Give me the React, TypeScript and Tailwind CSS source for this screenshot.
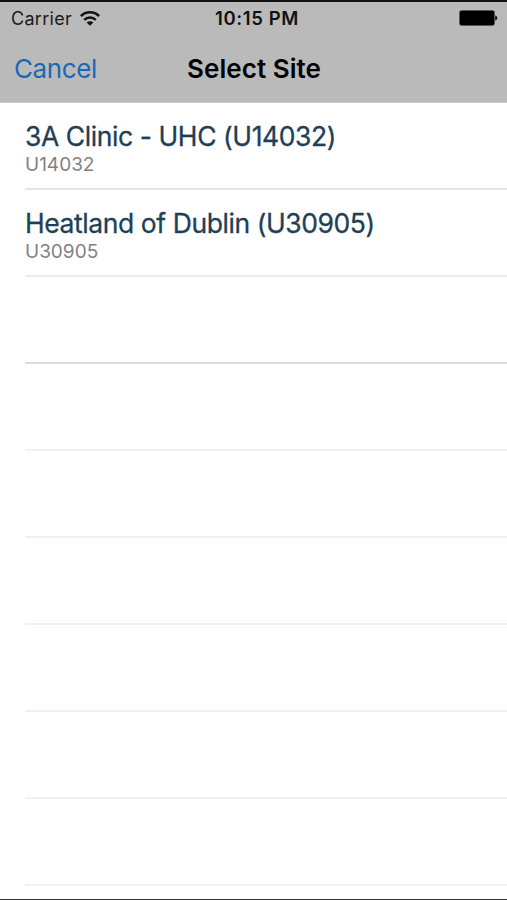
import React from 'react';

interface Site {
    name: string;
    code: string;
    divider: string;
}

const sites: Site[] = [
    { name: '3A Clinic - UHC (U14032)', code: 'U14032', divider: 'border-[#e6e6e6]' },
    { name: 'Heatland of Dublin (U30905)', code: 'U30905', divider: 'border-[#ededed]' }
];

// the table keeps drawing separators below the last site
const emptyRows = ['border-[#dadada]', 'border-[#f0f0f0]', 'border-[#f0f0f0]', 'border-[#f0f0f0]', 'border-[#f0f0f0]', 'border-[#f0f0f0]', 'border-[#f0f0f0]'];

const WifiIcon = () => (
    <svg width="20" height="15" viewBox="0 0 20 15" fill="none" stroke="#111" strokeWidth="2.5">
        <path d="M0.9 5.1C6 0.1 14 0.1 19.1 5.1" />
        <path d="M4.2 8.9C7.5 5.7 12.5 5.7 15.8 8.9" />
        <path d="M10 14.8L6.6 11.6C8.6 9.8 11.4 9.8 13.4 11.6Z" fill="#111" stroke="none" />
    </svg>
);

const BatteryIcon = () => (
    <svg width="39" height="16" viewBox="0 0 39 16">
        <rect x="0.5" y="0.5" width="35" height="15" rx="2" fill="#000" stroke="#555" strokeWidth="0.7" />
        <path d="M36.2 5.5C39 6 39 10 36.2 10.5Z" fill="#111" />
    </svg>
);

const StatusBar = () => (
    <div className="grid grid-cols-[1fr_auto_1fr] items-center h-[32px] pl-[11px] pr-[9px]">
        <div className="flex items-center gap-2">
            <span className="pt-[2px] text-[18px] leading-[22px] tracking-[0.28px] text-[#1a1a1a]">Carrier</span>
            <WifiIcon />
        </div>
        <span className="pl-[5px] text-center text-[18.5px] leading-[22px] font-semibold tracking-[0.6px] text-[#111]">10:15 PM</span>
        <div className="flex justify-end">
            <BatteryIcon />
        </div>
    </div>
);

const NavBar = () => (
    <div className="grid grid-cols-[1fr_auto_1fr] items-center h-[68px] pt-[2px] pl-[14px] pr-[13px]">
        <button className="text-left text-[26px] leading-8 tracking-[-0.4px] text-[#1b68b3]">Cancel</button>
        <h1 className="text-[26px] leading-8 font-semibold tracking-[0.05px] text-black">Select Site</h1>
    </div>
);

const SiteRow = ({ site }: { site: Site }) => (
    <li className={`h-[87px] pt-[17px] border-b-2 ${site.divider}`}>
        <p className="text-[26.5px] leading-[33px] tracking-[-0.42px] whitespace-nowrap text-[#1f3f56] [-webkit-text-stroke:0.3px_#1f3f56]">{site.name}</p>
        <p className="text-[19px] leading-[23px] text-[#828282]">{site.code}</p>
    </li>
);

export default function App() {
    return (
        <div className="flex flex-col h-[900px] overflow-hidden bg-white border-t-2 border-b border-t-[#111] border-b-[#333] font-['Inter','Liberation_Sans',sans-serif]">
            <header className="shrink-0 h-[101px] bg-[#bababa] border-b border-[#c9c9c9]">
                <StatusBar />
                <NavBar />
            </header>
            <ul className="pl-[25px]">
                {sites.map(site => (
                    <SiteRow key={site.code} site={site} />
                ))}
                {emptyRows.map((color, i) => (
                    <li key={i} className={`h-[87px] border-b-2 ${color}`} />
                ))}
            </ul>
        </div>
    );
}
